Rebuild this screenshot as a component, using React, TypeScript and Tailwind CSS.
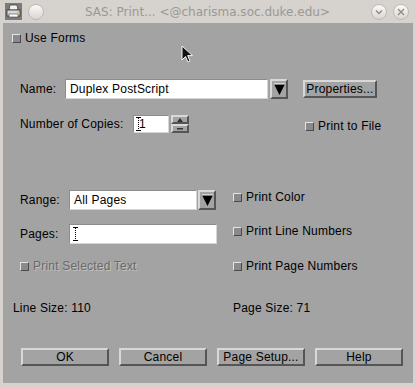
import React from 'react';

const font = { fontFamily: '"Liberation Sans", Arial, sans-serif' };

// small Motif-style toggle square
const Check: React.FC = () => (
  <span className="inline-block w-[9px] h-[9px] shrink-0 border border-t-[#e4e4e4] border-l-[#e4e4e4] border-b-[#4a4a4a] border-r-[#4a4a4a] bg-[#8a8a8a]" />
);

const Toggle: React.FC<{ label: string; disabled?: boolean }> = ({ label, disabled }) => (
  <div className="flex items-center h-[14px] gap-[4px]">
    <Check />
    <span
      className={
        disabled
          ? 'text-[#6a6a6a] [text-shadow:1px_1px_0_#c4c4c4]'
          : 'text-black'
      }
    >
      {label}
    </span>
  </div>
);

const Bevel: React.FC<{ className?: string; children?: React.ReactNode }> = ({ className = '', children }) => (
  <div
    className={`flex items-center justify-center bg-[#a3a3a3] border-2 border-t-[#d8d8d8] border-l-[#d8d8d8] border-b-[#555] border-r-[#555] ${className}`}
  >
    {children}
  </div>
);

const Field: React.FC<{ className?: string; children?: React.ReactNode }> = ({ className = '', children }) => (
  <div
    className={`flex items-center bg-white border border-t-[#8c8c8c] border-l-[#8c8c8c] border-b-[#d6d6d6] border-r-[#d6d6d6] ${className}`}
  >
    {children}
  </div>
);

const ArrowButton: React.FC = () => (
  <Bevel className="w-[18px] h-[20px]">
    <svg width="11" height="12" viewBox="0 0 11 12">
      <polygon points="0,1 11,1 5.5,12" fill="#000" />
      <polyline points="0,1 11,1" stroke="#fff" strokeWidth="1" />
    </svg>
  </Bevel>
);

const IBeam: React.FC = () => (
  <svg width="5" height="14" viewBox="0 0 5 14" className="shrink-0">
    <path d="M0 0.5h5M0 13.5h5" stroke="#000" strokeWidth="1" />
    <path d="M2.5 1v12" stroke="#000" strokeWidth="1" strokeDasharray="1 1" />
  </svg>
);

const PrinterIcon: React.FC = () => (
  <div className="w-[17px] h-[17px] bg-[#7b7b7b] flex items-center justify-center">
    <svg width="15" height="15" viewBox="0 0 15 15">
      <polygon points="4,1 11,1 12,6 3,6" fill="#f2f2f2" stroke="#444" strokeWidth="0.8" />
      <rect x="1" y="6" width="13" height="6" fill="#d8d8d8" stroke="#333" strokeWidth="0.8" />
      <rect x="3" y="10" width="9" height="3" fill="#fff" stroke="#444" strokeWidth="0.6" />
      <rect x="11" y="7.5" width="2" height="1" fill="#d4c000" />
    </svg>
  </div>
);

const TitleCircle: React.FC<{ children?: React.ReactNode }> = ({ children }) => (
  <div className="w-[16px] h-[16px] rounded-full border border-[#bdb9b4] bg-gradient-to-b from-[#fbfaf9] to-[#d9d6d2] flex items-center justify-center">
    {children}
  </div>
);

const Cursor: React.FC = () => (
  <svg
    width="14"
    height="20"
    viewBox="0 0 14 20"
    className="absolute left-[181px] top-[45px]"
  >
    <path d="M1 1 L1 15 L4.5 11.5 L7 17 L9 16 L6.6 10.6 L11.5 10.6 Z" fill="#111" stroke="#f5f5f5" strokeWidth="1" />
  </svg>
);

export default function App() {
  return (
    <div className="relative w-[416px] h-[387px] bg-[#d6d2ce] overflow-hidden text-[12px] tracking-[0.2px]" style={font}>
      {/* title bar */}
      <div className="h-[23px] flex items-center px-[5px]">
        <PrinterIcon />
        <div className="ml-[6px]">
          <TitleCircle />
        </div>
        <div
          className="flex-1 text-center text-[#9b9894] tracking-normal"
          style={{ fontFamily: '"DejaVu Sans", "Liberation Sans", sans-serif', fontSize: '12px' }}
        >
          SAS: Print... &lt;@charisma.soc.duke.edu&gt;
        </div>
        <div className="flex gap-[6px] mr-[2px]">
          <TitleCircle>
            <svg width="8" height="6" viewBox="0 0 8 6">
              <path d="M1 1.5 L4 4.5 L7 1.5" stroke="#8e8b87" strokeWidth="1.4" fill="none" />
            </svg>
          </TitleCircle>
          <TitleCircle>
            <svg width="8" height="8" viewBox="0 0 8 8">
              <path d="M1 1 L7 7 M7 1 L1 7" stroke="#8e8b87" strokeWidth="1.4" fill="none" />
            </svg>
          </TitleCircle>
        </div>
      </div>

      {/* dialog body */}
      <div className="mx-[3px] h-[360px] bg-[#a3a3a3] flex flex-col">
        <div className="mt-[8px] pl-[9px]">
          <Toggle label="Use Forms" />
        </div>

        {/* Name */}
        <div className="mt-[34px] h-[20px] flex items-center pl-[17px]">
          <span className="w-[45px]">Name:</span>
          <Field className="w-[203px] h-[20px] pl-[4px]">Duplex PostScript</Field>
          <div className="ml-[2px]">
            <ArrowButton />
          </div>
          <Bevel className="ml-[15px] w-[74px] h-[18px] mb-[1px]">Properties...</Bevel>
        </div>

        {/* Copies */}
        <div className="mt-[16px] h-[18px] flex items-center pl-[17px]">
          <span className="w-[113px]">Number of Copies:</span>
          <Field className="w-[36px] h-[18px] pl-[2px]">
            <IBeam />
            <span className="-ml-[2px]">1</span>
          </Field>
          <div className="ml-[2px] flex flex-col">
            <Bevel className="w-[18px] h-[9px] border">
              <svg width="6" height="4" viewBox="0 0 6 4">
                <polygon points="0,4 6,4 3,0" fill="#333" />
              </svg>
            </Bevel>
            <Bevel className="w-[18px] h-[9px] border">
              <svg width="6" height="3" viewBox="0 0 6 3">
                <rect x="0" y="1" width="6" height="1.5" fill="#333" />
              </svg>
            </Bevel>
          </div>
          <div className="ml-[116px] mt-[4px]">
            <Toggle label="Print to File" />
          </div>
        </div>

        {/* Range / Pages + print options */}
        <div className="mt-[57px] flex">
          <div className="w-[230px] flex flex-col">
            <div className="h-[20px] flex items-center pl-[17px]">
              <span className="w-[49px]">Range:</span>
              <Field className="w-[128px] h-[20px] pl-[4px]">All Pages</Field>
              <div className="ml-[1px]">
                <ArrowButton />
              </div>
            </div>
            <div className="mt-[14px] h-[20px] flex items-center pl-[17px]">
              <span className="w-[49px]">Pages:</span>
              <Field className="w-[148px] h-[20px] pl-[3px]">
                <IBeam />
              </Field>
            </div>
            <div className="mt-[15px] pl-[17px]">
              <Toggle label="Print Selected Text" disabled />
            </div>
          </div>
          <div className="flex flex-col">
            <Toggle label="Print Color" />
            <div className="mt-[20px]">
              <Toggle label="Print Line Numbers" />
            </div>
            <div className="mt-[21px]">
              <Toggle label="Print Page Numbers" />
            </div>
          </div>
        </div>

        {/* sizes */}
        <div className="mt-[28px] h-[14px] flex items-center pl-[10px]">
          <span className="w-[220px]">Line Size: 110</span>
          <span>Page Size: 71</span>
        </div>

        {/* buttons */}
        <div className="mt-[33px] flex gap-[10px] pl-[18px]">
          <Bevel className="w-[88px] h-[18px]">OK</Bevel>
          <Bevel className="w-[88px] h-[18px]">Cancel</Bevel>
          <Bevel className="w-[88px] h-[18px]">Page Setup...</Bevel>
          <Bevel className="w-[88px] h-[18px]">Help</Bevel>
        </div>
      </div>

      <Cursor />
    </div>
  );
}
